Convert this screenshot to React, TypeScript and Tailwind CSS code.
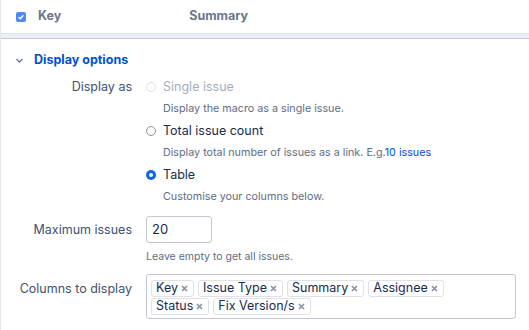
import React from "react";

const font = { fontFamily: "Inter, 'Noto Sans', sans-serif" };

function Tag({ label }: { label: string }) {
  return (
    <span className="inline-flex items-center h-[17px] border border-[#dfe1e6] rounded-[3px] bg-white pl-[4px] pr-[5px] text-[12.5px] text-[#172b4d] leading-none">
      {label}
      <svg className="ml-[3px]" width="7" height="7" viewBox="0 0 7 7">
        <path d="M1 1 L6 6 M6 1 L1 6" stroke="#8993a4" strokeWidth="1.7" />
      </svg>
    </span>
  );
}

function Radio({ state }: { state: "disabled" | "off" | "on" }) {
  if (state === "on")
    return (
      <span className="w-[10px] h-[10px] rounded-full bg-[#0c66e4] flex items-center justify-center">
        <span className="w-[4px] h-[4px] rounded-full bg-white" />
      </span>
    );
  return (
    <span
      className={
        "w-[10px] h-[10px] rounded-full border bg-white " +
        (state === "disabled" ? "border-[#dfe1e6]" : "border-[#8993a4]")
      }
    />
  );
}

export default function App() {
  return (
    <div className="w-[529px] h-[330px] bg-white overflow-hidden border-l border-[#e4e6ea]" style={font}>
      <div className="h-[33px] flex items-center">
        <span className="ml-[15px] w-[10px] h-[10px] rounded-[2px] bg-[#4c8bf5] flex items-center justify-center">
          <svg width="8" height="8" viewBox="0 0 8 8">
            <path d="M1.6 4.2 L3.2 5.8 L6.4 2.2" stroke="white" strokeWidth="1.4" fill="none" />
          </svg>
        </span>
        <span className="ml-[12px] text-[12.5px] font-bold text-[#6b778c]">Key</span>
        <span className="ml-[128px] text-[12.5px] font-bold text-[#6b778c]">Summary</span>
      </div>
      <div className="h-[6px] bg-[#ebeff6] border-t border-[#dfe1e6] border-b border-b-[#c1c7d0]" />
      <div className="flex items-center h-[30px] mt-[6px]">
        <svg className="ml-[14px]" width="9" height="9" viewBox="0 0 9 9">
          <path d="M1.5 3 L4.5 6 L7.5 3" stroke="#6b778c" strokeWidth="1.4" fill="none" />
        </svg>
        <span className="ml-[10px] text-[12.5px] font-bold text-[#0052cc]">Display options</span>
      </div>
      <div className="grid grid-cols-[131px_1fr] gap-x-[14px]">
        <div className="text-right text-[12.5px] text-[#42526e] leading-[22px] mt-[1px]">Display as</div>
        <div className="flex flex-col mt-[1px]">
          <div className="flex items-center h-[22px] gap-[7px]">
            <Radio state="disabled" />
            <span className="text-[12.5px] text-[#a5adba]">Single issue</span>
          </div>
          <div className="pl-[17px] text-[10.75px] text-[#5e6c84] h-[22px] leading-[22px]">Display the macro as a single issue.</div>
          <div className="flex items-center h-[22px] gap-[7px]">
            <Radio state="off" />
            <span className="text-[12.5px] text-[#172b4d]">Total issue count</span>
          </div>
          <div className="pl-[17px] text-[10.75px] text-[#5e6c84] h-[22px] leading-[22px]">
            Display total number of issues as a link. E.g.<span className="text-[#0052cc]">10 issues</span>
          </div>
          <div className="flex items-center h-[22px] gap-[7px]">
            <Radio state="on" />
            <span className="text-[12.5px] text-[#172b4d]">Table</span>
          </div>
          <div className="pl-[17px] text-[10.75px] text-[#5e6c84] h-[22px] leading-[22px]">Customise your columns below.</div>
        </div>

        <div className="text-right text-[12.5px] text-[#42526e] mt-[8px] leading-[27px]">Maximum issues</div>
        <div className="flex flex-col mt-[8px]">
          <div className="w-[66px] h-[27px] border border-[#c1c7d0] rounded-[3px] flex items-center pl-[5px] text-[13px] text-[#172b4d]">20</div>
          <div className="text-[10.5px] text-[#5e6c84] leading-[14px] mt-[7px]">Leave empty to get all issues.</div>
        </div>

        <div className="text-right text-[12.5px] text-[#42526e] mt-[11px] leading-[28px]">Columns to display</div>
        <div className="mt-[10px] w-[370px] h-[45px] border border-[#c1c7d0] rounded-[3px] pl-[4px] pt-[5px] flex flex-col gap-[1px]">
          <div className="flex gap-[4px]">
            <Tag label="Key" />
            <Tag label="Issue Type" />
            <Tag label="Summary" />
            <Tag label="Assignee" />
          </div>
          <div className="flex gap-[4px]">
            <Tag label="Status" />
            <Tag label="Fix Version/s" />
          </div>
        </div>
      </div>
    </div>
  );
}
